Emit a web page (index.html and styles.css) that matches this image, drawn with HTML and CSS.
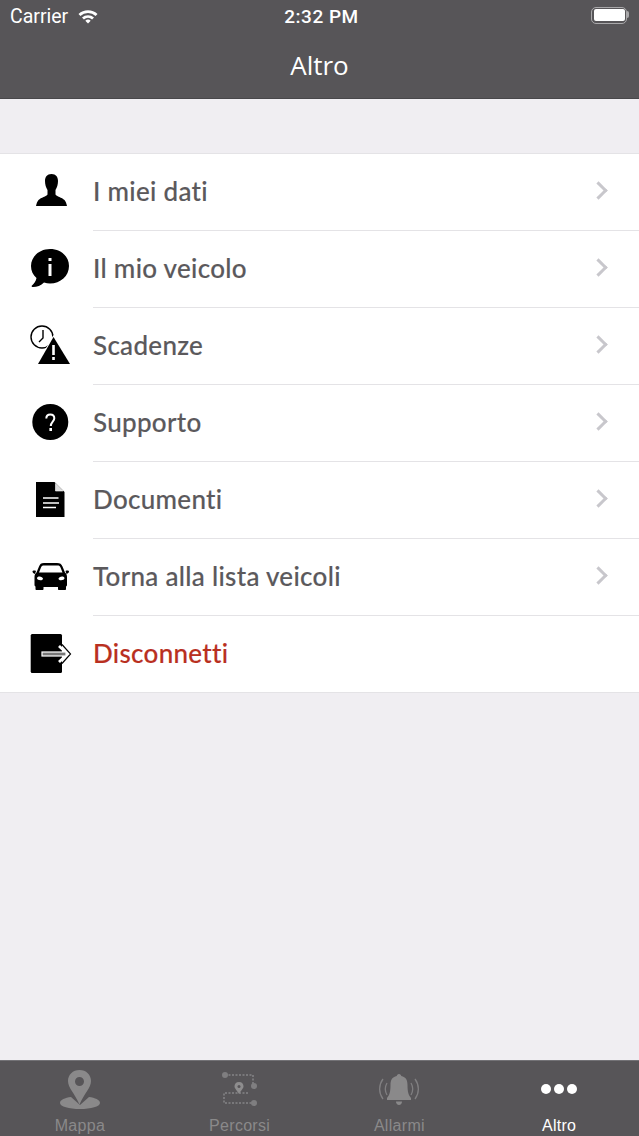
FILE: index.html
```html
<!DOCTYPE html>
<html lang="it">
<head>
    <meta charset="UTF-8">
    <meta name="viewport" content="width=device-width, initial-scale=1.0">
    <title>Altro</title>
    <link rel="stylesheet" href="styles.css">
</head>
<body>
    <div class="app">
        <header class="top-bar">
            <div class="status-bar">
                <div class="status-left">
                    <span>Carrier</span>
                    <svg class="wifi" width="22" height="15" viewBox="0 0 20 15">
                        <path d="M0.500 5 A14 14 0 0 1 19.500 5 L17.600 7 A11.200 11.200 0 0 0 2.400 7 Z" fill="#fff"/>
                        <path d="M4 8.500 A9 9 0 0 1 16 8.500 L14.100 10.400 A6.400 6.400 0 0 0 5.900 10.400 Z" fill="#fff"/>
                        <path d="M7.300 11.700 A4.200 4.200 0 0 1 12.700 11.700 L10 14.600 Z" fill="#fff"/>
                    </svg>
                </div>
                <span class="status-time">2:32 PM</span>
                <div class="battery"><div class="battery-fill"></div></div>
            </div>
            <h1 class="nav-title">Altro</h1>
        </header>

        <main class="content">
            <ul class="menu">
                <li class="menu-row">
                    <svg class="menu-icon" viewBox="0 0 44 44">
                        <path d="M22.500 5c-4.500 0-6.500 3-6.500 7 0 3.500 1 6.500 2.500 9v4.500c-1 2-6.500 3-9 5.500-1.200 1.300-2 3.500-2.500 6h31c-.5-2.500-1.300-4.700-2.500-6-2.500-2.500-8-3.500-9-5.500V21c1.500-2.500 2.500-5.500 2.500-9 0-4-2-7-6.500-7z"/>
                    </svg>
                    <div class="menu-body"><span class="menu-label">I miei dati</span><span class="chevron"></span></div>
                </li>
                <li class="menu-row">
                    <svg class="menu-icon" viewBox="0 0 44 44">
                        <path d="M21 3C10.500 3 2 10.500 2 20c0 5 2 9 5.500 12-.5 3-2.500 6-4.500 7.500-.8.700-.3 1.500 1 1.500 4 0 8-1.500 11-4.500 2 .6 4 1 6 1 10.500 0 19-7.500 19-17.500S31.500 3 21 3z"/>
                        <rect x="19.500" y="18" width="3" height="12" fill="#fff"/>
                        <rect x="19.500" y="12" width="3" height="3" fill="#fff"/>
                    </svg>
                    <div class="menu-body"><span class="menu-label">Il mio veicolo</span><span class="chevron"></span></div>
                </li>
                <li class="menu-row">
                    <svg class="menu-icon" viewBox="0 0 44 44">
                        <circle cx="13" cy="14" r="11" fill="none" stroke="#000" stroke-width="1.400"/>
                        <path d="M14 7v8l-4 4" fill="none" stroke="#000" stroke-width="1.400"/>
                        <path d="M24.500 14 L41 41 H9 Z" stroke="#fff" stroke-width="2" paint-order="stroke"/>
                        <rect x="23.200" y="22" width="2.600" height="10" fill="#fff"/>
                        <rect x="23.200" y="34" width="2.600" height="3" fill="#fff"/>
                    </svg>
                    <div class="menu-body"><span class="menu-label">Scadenze</span><span class="chevron"></span></div>
                </li>
                <li class="menu-row">
                    <svg class="menu-icon" viewBox="0 0 44 44">
                        <circle cx="21.300" cy="22" r="18"/>
                        <path d="M17.300 18.500c0-2.600 1.600-4 4-4s4 1.400 4 3.800c0 3.200-3.500 3.500-3.500 7.700" fill="none" stroke="#fff" stroke-width="2"/>
                        <rect x="20.400" y="28" width="2.600" height="3" fill="#fff"/>
                    </svg>
                    <div class="menu-body"><span class="menu-label">Supporto</span><span class="chevron"></span></div>
                </li>
                <li class="menu-row">
                    <svg class="menu-icon" viewBox="0 0 44 44">
                        <path d="M7 5H25.500L35.500 15V40H7Z"/>
                        <path d="M26.500 6.500V14H34Z" fill="#dcdcdc" stroke="#fff" stroke-width=".6"/>
                        <path d="M14 21H29.500M14 26H30M14 30.500H27" stroke="#fff" stroke-width="1.300"/>
                    </svg>
                    <div class="menu-body"><span class="menu-label">Documenti</span><span class="chevron"></span></div>
                </li>
                <li class="menu-row">
                    <svg class="menu-icon" viewBox="0 0 44 44">
                        <path fill-rule="evenodd" d="M15 9h13c3 0 4.500 1 5.500 3.500l2.500 6c1.500 1.200 2 2.800 2 4.500v8c0 .8-.4 1.300-1 1.500V35c0 .6-.4 1-1 1h-6c-.6 0-1-.4-1-1v-2H14.500v2c0 .6-.4 1-1 1h-6c-.6 0-1-.4-1-1v-2.500c-.6-.2-1-.7-1-1.500v-8c0-1.700.5-3.300 2-4.500l2.500-6C11 10 12 9 15 9zm0 2.500c-1.700 0-2.400.6-3 2L10 18.500h23.500l-2-5c-.6-1.400-1.300-2-3-2zM10.500 22.500c-1.300 0-2.500.7-2.500 1.700s1.700 2 3.400 2 2.600-.6 2.600-1.500-1.900-2.200-3.500-2.200zm22.500 0c-1.600 0-3.500 1.300-3.500 2.200s.9 1.500 2.600 1.500 3.400-1 3.400-2-1.200-1.700-2.500-1.700z"/>
                        <path d="M3.500 17.500c0-.8 1.700-1.200 3.500-.6l-1 3c-1.500-.4-2.500-1.400-2.500-2.400zM40 17.500c0-.8-1.700-1.200-3.500-.6l1 3c1.500-.4 2.500-1.400 2.500-2.400z"/>
                    </svg>
                    <div class="menu-body"><span class="menu-label">Torna alla lista veicoli</span><span class="chevron"></span></div>
                </li>
                <li class="menu-row menu-row-last">
                    <svg class="menu-icon" viewBox="0 0 44 44">
                        <rect x="1.700" y="3" width="31.300" height="39" rx="1.500"/>
                        <path d="M33 13.500L41.500 23L33 32.500" fill="none" stroke="#000" stroke-width="1.200"/>
                        <path d="M30 15L38.500 23L30 31" fill="none" stroke="#fff" stroke-width="2.800"/>
                        <rect x="13" y="21" width="24" height="4" fill="#777" stroke="#fff" stroke-width="1.200"/>
                    </svg>
                    <div class="menu-body"><span class="menu-label menu-label-danger">Disconnetti</span></div>
                </li>
            </ul>
        </main>

        <nav class="tab-bar">
            <div class="tab">
                <svg class="tab-icon" width="44" height="44" viewBox="0 0 44 44">
                    <path d="M13 30c-6 .8-11 2.800-11 6 0 3.500 9 6 20 6s20-2.500 20-6c0-3.200-5-5.200-11-6l-9 8z" fill="#8a898a"/>
                    <path fill-rule="evenodd" d="M21.500 3C14.800 3 10 7.800 10 14c0 7 6.500 12 11.500 23.500C26.500 26 33 21 33 14c0-6.200-4.800-11-11.500-11zm0 7a4.500 4.500 0 1 1 0 9 4.500 4.500 0 0 1 0-9z" fill="#8a898a"/>
                </svg>
                <span class="tab-label">Mappa</span>
            </div>
            <div class="tab">
                <svg class="tab-icon" width="44" height="44" viewBox="0 0 44 44">
                    <path d="M7 8H35V19M30 26H6V36H34" fill="none" stroke="#858486" stroke-width="1.500" stroke-dasharray="2 1.500"/>
                    <circle cx="7" cy="8" r="3" fill="#7f7e80"/>
                    <circle cx="36" cy="19" r="3" fill="#7f7e80"/>
                    <circle cx="36" cy="36" r="3" fill="#7f7e80"/>
                    <path d="M21 15c-3 0-4.500 2.200-4.500 4.200 0 2.400 2.800 4.300 4.500 7.800 1.700-3.500 4.500-5.400 4.500-7.800 0-2-1.500-4.200-4.500-4.200z" fill="#8e8d8e"/>
                    <circle cx="21" cy="19.500" r="1.500" fill="#575558"/>
                </svg>
                <span class="tab-label">Percorsi</span>
            </div>
            <div class="tab">
                <svg class="tab-icon" width="44" height="44" viewBox="0 0 44 44">
                    <path d="M22 7c-1.400 0-2.200 1-2.200 2C15 10 13.500 13 13.500 18c0 7-1 10-3.500 13v2h24v-2c-2.500-3-3.500-6-3.500-13 0-5-1.500-8-6.300-9C24.200 8 23.400 7 22 7z" fill="#8a898a"/>
                    <path d="M19 34.500h6c0 2-1.300 3.500-3 3.500s-3-1.500-3-3.500z" fill="#8a898a"/>
                    <path d="M6 12C1.500 18 1.500 26 6 32M38 12c4.500 6 4.500 14 0 20M10 16c-2 3.500-2 8.500 0 12M34 16c2 3.500 2 8.500 0 12" fill="none" stroke="#807f81" stroke-width="1.300"/>
                </svg>
                <span class="tab-label">Allarmi</span>
            </div>
            <div class="tab tab-active">
                <div class="tab-dots"><span></span><span></span><span></span></div>
                <span class="tab-label">Altro</span>
            </div>
        </nav>
    </div>
</body>
</html>
```

FILE: styles.css
```css
* {
    box-sizing: border-box;
}
html, body {
    margin: 0;
    padding: 0;
}
body {
    font-family: "Liberation Sans", Arial, sans-serif;
    background-color: #f0eef2;
}
.app {
    width: 639px;
    height: 1136px;
    display: flex;
    flex-direction: column;
    overflow: hidden;
}
.top-bar {
    height: 99px;
    background-color: #575558;
    border-bottom: 1px solid #48474a;
    color: #fff;
}
.status-bar {
    height: 32px;
    padding: 0 12px 0 10px;
    display: grid;
    grid-template-columns: 1fr auto 1fr;
    align-items: center;
    font-family: Roboto, sans-serif;
    font-size: 19.500px;
}
.status-left {
    display: flex;
    align-items: center;
    gap: 9px;
}
.status-time {
    margin-left: 6px;
    font-size: 19px;
    font-weight: 500;
    letter-spacing: 0.500px;
}
.battery {
    position: relative;
    justify-self: end;
    width: 36px;
    height: 17px;
    margin-bottom: 2px;
    border: 1.500px solid #a9a8aa;
    border-radius: 5px;
    padding: 1.500px;
}
.battery::after {
    content: "";
    position: absolute;
    left: 35px;
    top: 3.500px;
    width: 2px;
    height: 7px;
    background-color: #a9a8aa;
    border-radius: 0 2px 2px 0;
}
.battery-fill {
    height: 100%;
    background-color: #fff;
    border-radius: 2px;
}
.nav-title {
    margin: 0;
    height: 66px;
    display: flex;
    align-items: center;
    justify-content: center;
    padding-bottom: 1px;
    font-family: "Open Sans", sans-serif;
    font-size: 26px;
    font-weight: 500;
}
.content {
    flex: 1;
    padding-top: 54px;
}
.menu {
    list-style: none;
    margin: 0;
    padding: 0;
    background-color: #fff;
    border-top: 1px solid #e4e3e6;
    border-bottom: 1px solid #e4e3e6;
}
.menu-row {
    height: 77px;
    display: flex;
    align-items: stretch;
}
.menu-row-last {
    height: 76px;
}
.menu-icon {
    width: 44px;
    height: 44px;
    margin: 15px 20px 0 29px;
    flex: none;
}
.menu-body {
    flex: 1;
    display: flex;
    align-items: center;
    justify-content: space-between;
    padding: 0 32px 3px 0;
    border-bottom: 1px solid #e4e3e6;
}
.menu-row-last .menu-body {
    border-bottom: none;
}
.menu-label {
    font-family: Lato, sans-serif;
    font-size: 26px;
    font-weight: 500;
    letter-spacing: 0.300px;
    color: #5b595c;
    -webkit-text-stroke: 0.150px currentColor;
}
.menu-label-danger {
    color: #b9301f;
}
.chevron {
    width: 13px;
    height: 13px;
    border-top: 3px solid #c8c7cc;
    border-right: 3px solid #c8c7cc;
    transform: rotate(45deg);
    margin: 0 2px 0 0;
}
.tab-bar {
    height: 76px;
    background-color: #575558;
    border-top: 1px solid #737276;
    display: grid;
    grid-template-columns: repeat(4, 1fr);
}
.tab {
    display: flex;
    flex-direction: column;
    align-items: center;
    padding-top: 6px;
    color: #8a898a;
}
.tab-icon {
    display: block;
}
.tab-label {
    font-family: "Liberation Sans", Arial, sans-serif;
    font-size: 16px;
    line-height: 18px;
    margin-top: 6px;
    letter-spacing: 0.300px;
}
.tab-active {
    color: #fff;
}
.tab-dots {
    height: 44px;
    display: flex;
    align-items: center;
    justify-content: center;
    gap: 3px;
}
.tab-dots span {
    width: 10px;
    height: 10px;
    border-radius: 50%;
    background-color: #fff;
}
```
